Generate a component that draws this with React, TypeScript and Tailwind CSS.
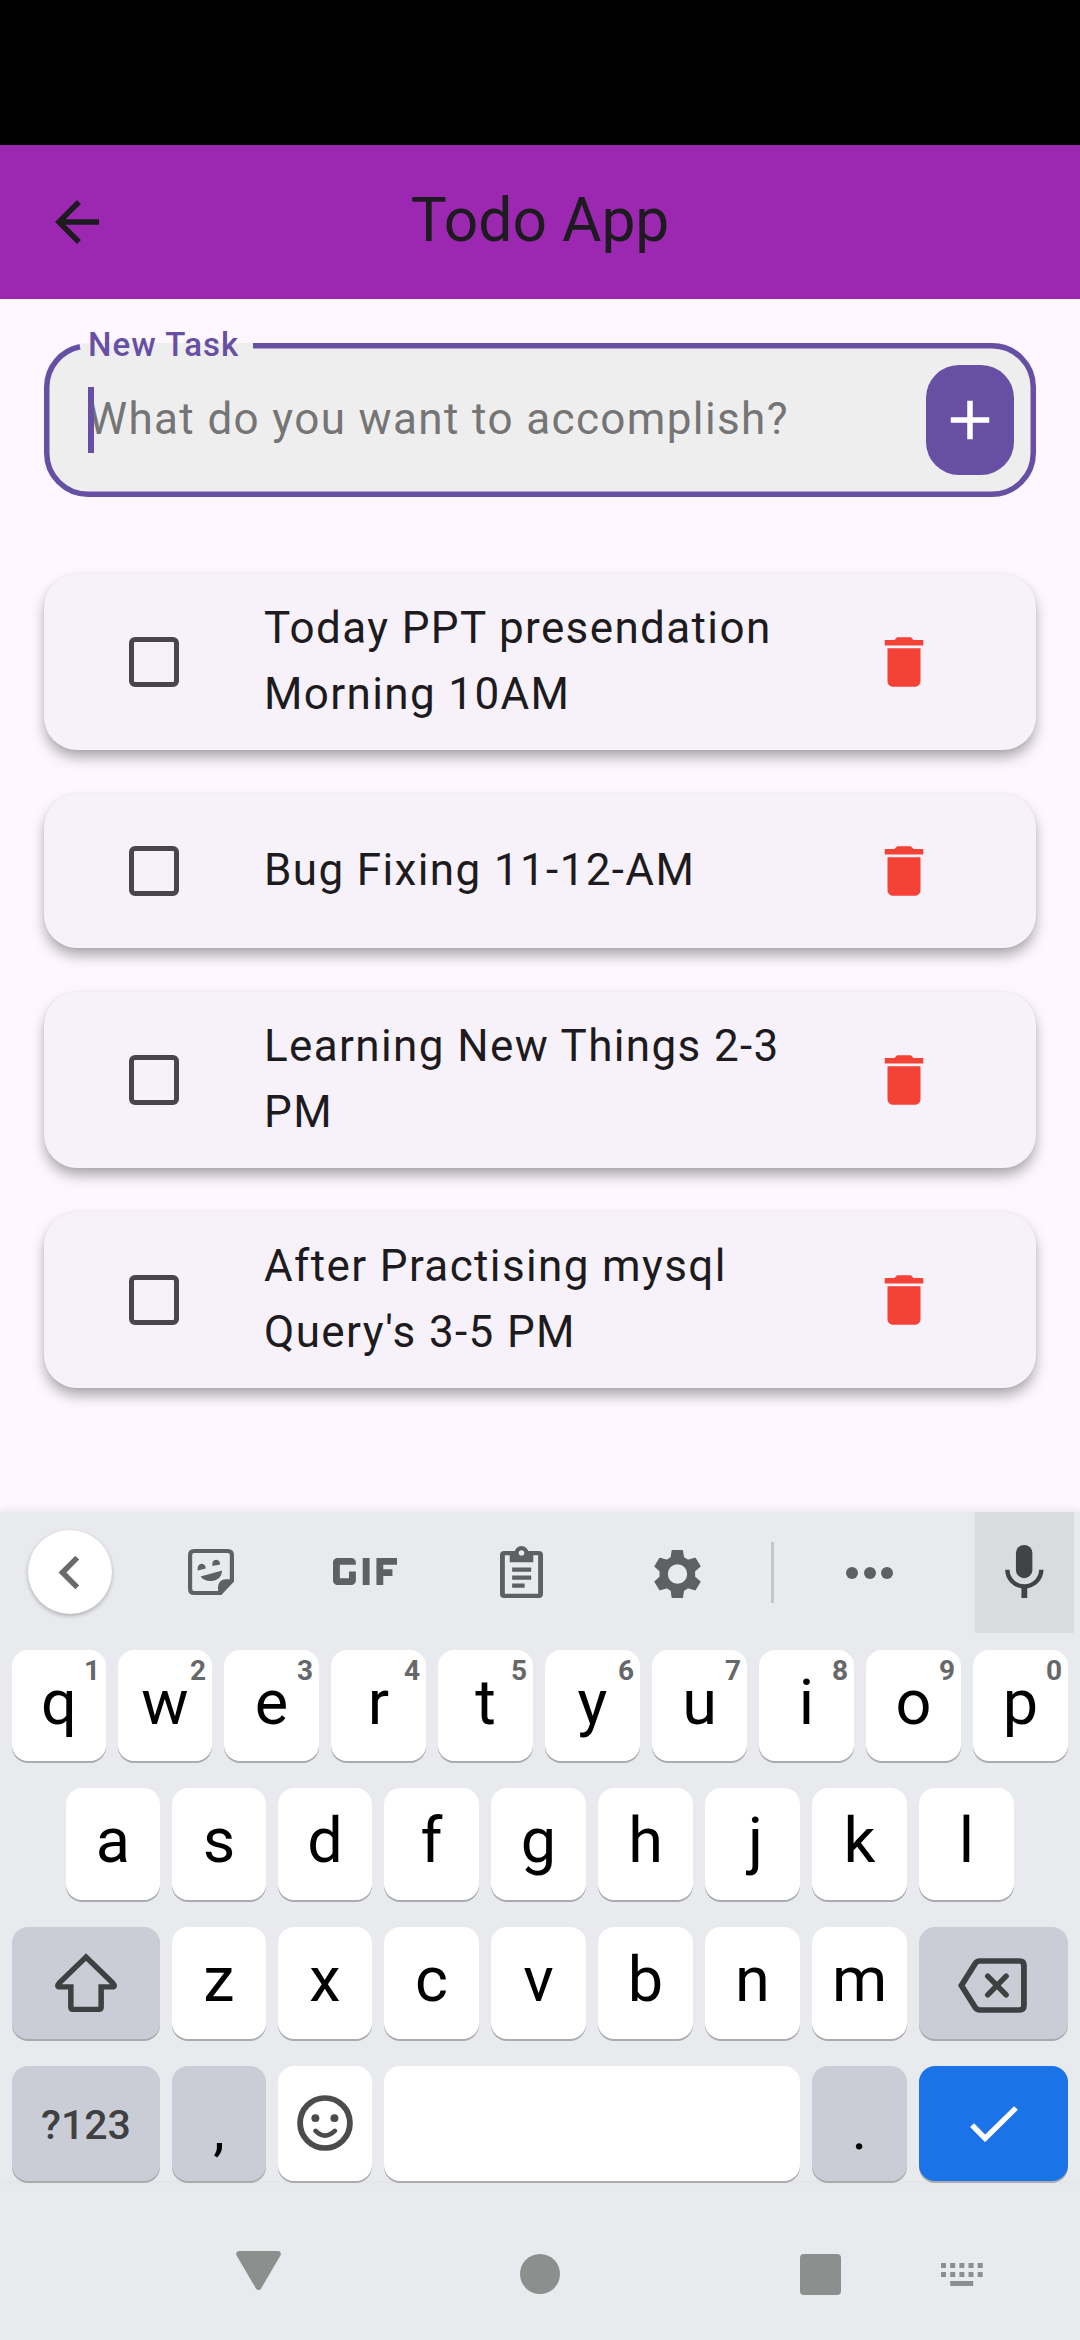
import type { ReactNode } from "react";
import { MdAdd, MdArrowBack, MdDelete } from "react-icons/md";

const tasks = [
  "Today PPT presendation Morning 10AM",
  "Bug Fixing 11-12-AM",
  "Learning New Things 2-3 PM",
  "After Practising mysql Query's 3-5 PM",
];

function TaskCard({ title }: { title: string }) {
  return (
    <li className="flex min-h-[154px] items-center rounded-[33px] bg-[#f7f2fa] py-[22px] pl-[85px] shadow-[0_0_3px_rgba(0,0,0,0.06),0_8px_14px_-1px_rgba(0,0,0,0.34)]">
      <span className="size-[50px] shrink-0 rounded-[6px] border-[5.5px] border-[#49454f]" />
      <span className="ml-[85px] w-[570px] shrink-0 text-[44px] leading-[66px] tracking-[1.375px] text-[#1d1b20]">
        <span className="relative -top-px">{title}</span>
      </span>
      <MdDelete className="ml-[37px] size-[66px] shrink-0 text-[#f44336]" />
    </li>
  );
}

function Key({ children, className = "bg-white" }: { children?: ReactNode; className?: string }) {
  return (
    <div className={`relative flex justify-center rounded-[16px] shadow-[0_2px_0_#a9abae] ${className}`}>
      {children}
    </div>
  );
}

function LetterKey({ letter, hint }: { letter: string; hint?: string }) {
  return (
    <Key>
      <span className={`pt-[16px] text-[63px] leading-[74px] text-black ${letter === "j" ? "pl-[6px]" : ""}`}>
        {letter}
      </span>
      {hint && (
        <span className="absolute top-[5px] right-[6px] text-[28px] leading-[32px] font-bold text-[#666769]">
          {hint}
        </span>
      )}
    </Key>
  );
}

function Toolbar() {
  return (
    <div className="flex h-[121px] items-center text-[#5f6062]">
      <div className="mt-[-1px] ml-[28px] flex size-[84px] items-center justify-center rounded-full bg-white pr-[2px] shadow-[0_2px_4px_rgba(0,0,0,0.25)]">
        <svg className="h-[33px] w-[20px]" viewBox="172 197 58 98" preserveAspectRatio="none" fill="none" stroke="#6a6a6a" strokeWidth="16">
          <path d="M225 202 182 246 225 290" />
        </svg>
      </div>
      <svg className="mt-[-1px] ml-[76px] h-[46px] w-[46px]" viewBox="547 178 132 137" preserveAspectRatio="none" fill="currentColor">
        <path d="M565 184H661Q673 184 673 196V272L640 309H565Q553 309 553 297V196Q553 184 565 184Z" fill="none" stroke="currentColor" strokeWidth="12" />
        <path d="M633 312V292Q635 268 656 268H679V275L640 315Z" />
        <path d="M575 242Q573 222 587 222Q597 223 598 236Z" />
        <path d="M617 229Q615 210 628 210Q639 211 639 224Z" />
        <path d="M583 260 645 242Q643 270 616 273Q594 275 583 260Z" />
      </svg>
      <svg className="mt-[-3px] ml-[99px] h-[27px] w-[64px]" viewBox="5 9 14 6" preserveAspectRatio="none" fill="currentColor">
        <path d="M11.5 9H13v6h-1.5zM9 9H6c-.6 0-1 .5-1 1v4c0 .5.4 1 1 1h3c.6 0 1-.5 1-1v-2H8.5v1.5h-2v-3H10V10c0-.5-.4-1-1-1zm10 1.5V9h-4.5v6H16v-2h2v-1.5h-2v-1z" />
      </svg>
      <svg className="mt-[-1px] ml-[103px] h-[52px] w-[43px]" viewBox="1452 168 124 157" preserveAspectRatio="none" fill="currentColor">
        <path fillRule="evenodd" d="M1464 183H1564Q1576 183 1576 195V313Q1576 325 1564 325H1464Q1452 325 1452 313V195Q1452 183 1464 183ZM1466 196V312H1562V196H1548V217H1480V196Z" />
        <path d="M1494 188A20 20 0 0 1 1534 188V200H1494Z" />
        <path d="M1487 233H1542V246H1487ZM1487 257H1542V270H1487ZM1487 281H1523V294H1487Z" />
        <circle cx="1514" cy="189" r="8" fill="#e8eaed" />
      </svg>
      <svg className="mt-[2px] ml-[111px] h-[48px] w-[47px]" viewBox="331 180 136 144" preserveAspectRatio="none" fill="currentColor">
        <path
          fillRule="evenodd"
          stroke="currentColor"
          strokeWidth="4"
          strokeLinejoin="round"
          d="M384 182H413L416 203 429 211 450 205 464 229 448 243V261L464 275 450 299 429 293 416 301 413 322H384L381 301 369 293 348 299 334 275 349 261V243L334 229 348 205 369 211 381 203ZM369 252A30 31.500 0 1 0 429 252A30 31.500 0 1 0 369 252Z"
        />
      </svg>
      <div className="ml-[70px] h-[61px] w-[3px] bg-[#c5c6c9]" />
      <div className="ml-[72px] flex w-[47px] justify-between">
        <span className="size-[12px] rounded-full bg-current" />
        <span className="size-[12px] rounded-full bg-current" />
        <span className="size-[12px] rounded-full bg-current" />
      </div>
      <div className="ml-[82px] flex h-full w-[99px] items-center justify-center bg-[#dadbdf] text-[#424345]">
        <svg className="mt-[-2px] h-[53px] w-[39px]" viewBox="1349 165 114 160" preserveAspectRatio="none" fill="currentColor">
          <rect x="1381" y="165" width="48" height="100" rx="24" />
          <path d="M1356 240A49.500 50 0 0 0 1455 240" fill="none" stroke="currentColor" strokeWidth="13" />
          <path d="M1397 289H1414V325H1397Z" />
        </svg>
      </div>
    </div>
  );
}

function Keyboard() {
  return (
    <section className="relative bg-[#e8eaed] shadow-[0_-2px_8px_rgba(0,0,0,0.08)]">
      <Toolbar />
      <div className="mt-[17px] grid h-[111px] grid-cols-[repeat(2,94px)_repeat(8,95px)] gap-[12px] px-[12px]">
        {"qwertyuiop".split("").map((c, i) => (
          <LetterKey key={c} letter={c} hint={String((i + 1) % 10)} />
        ))}
      </div>
      <div className="mt-[27px] grid h-[112px] grid-cols-[repeat(3,94px)_repeat(6,95px)] gap-[12px] px-[66px]">
        {"asdfghjkl".split("").map((c) => (
          <LetterKey key={c} letter={c} />
        ))}
      </div>
      <div className="mt-[27px] grid h-[112px] grid-cols-[148px_94px_94px_repeat(5,95px)_149px] gap-[12px] px-[12px]">
        <Key className="items-center bg-[#cbcdd6]">
          <svg className="mt-[-2px] h-[59px] w-[62px]" viewBox="159 548 180 176" preserveAspectRatio="none" fill="none" stroke="#3f4041" strokeWidth="16">
            <path d="M249 560 171 638Q162 649 174 649H205V710Q205 716 211 716H287Q293 716 293 710V649H324Q336 649 327 638Z" />
          </svg>
        </Key>
        {"zxcvbnm".split("").map((c) => (
          <LetterKey key={c} letter={c} />
        ))}
        <Key className="items-center bg-[#cbcdd6]">
          <svg className="mt-[4px] mr-[2px] h-[55px] w-[69px]" viewBox="1213 564 202 164" preserveAspectRatio="none" fill="none" stroke="#3f4041" strokeWidth="17">
            <path d="M1223 646 1263 581Q1268 573 1277 573H1393Q1406 573 1406 586V706Q1406 719 1393 719H1277Q1268 719 1263 711Z" />
            <path d="M1300 618 1354 674M1354 618 1300 674" strokeWidth="16" strokeLinecap="round" />
          </svg>
        </Key>
      </div>
      <div className="mt-[27px] grid h-[115px] grid-cols-[148px_94px_94px_416px_95px_149px] gap-[12px] px-[12px]">
        <Key className="bg-[#cbcdd6]">
          <span className="pt-[35px] text-[41px] leading-[48px] font-medium text-[#3f4041]">?123</span>
        </Key>
        <Key className="bg-[#cbcdd6]">
          <span className="pt-[29px] text-[58px] leading-[68px] text-black">,</span>
        </Key>
        <Key className="items-center bg-white">
          <svg className="mt-[-2px] size-[56px]" viewBox="862 165 163 167" preserveAspectRatio="none" fill="none" stroke="#4b4b4b">
            <ellipse cx="943.500" cy="248.500" rx="72.500" ry="74.500" strokeWidth="17" />
            <path d="M916 272Q943 300 972 272" strokeWidth="14" strokeLinecap="round" />
            <circle cx="915.500" cy="234" r="11.500" fill="#4b4b4b" stroke="none" />
            <circle cx="971" cy="234" r="11.500" fill="#4b4b4b" stroke="none" />
          </svg>
        </Key>
        <Key />
        <Key className="bg-[#cbcdd6]">
          <span className="pt-[29px] text-[58px] leading-[68px] text-black">.</span>
        </Key>
        <Key className="items-center bg-[#1b73e8]">
          <svg className="h-[36px] w-[48px]" viewBox="1247 197 140 109" preserveAspectRatio="none" fill="none" stroke="white" strokeWidth="16">
            <path d="M1253 255 1291 295 1381 203" />
          </svg>
        </Key>
      </div>
    </section>
  );
}

function NavigationBar() {
  return (
    <nav className="flex flex-1 items-start bg-[#e8eaed] pt-[70px] text-[#8d8f8e]">
      <svg className="ml-[236px] h-[39px] w-[45px]" viewBox="0 0 45 39" fill="currentColor" stroke="currentColor" strokeWidth="6" strokeLinejoin="round">
        <path d="M3.200 3H41.800L22.500 36Z" />
      </svg>
      <span className="mt-[3px] ml-[239px] size-[40px] rounded-full bg-current" />
      <span className="mt-[3px] ml-[240px] h-[41px] w-[41px] rounded-[4px] bg-current" />
      <svg className="mt-[12px] ml-[100px] h-[23px] w-[42px]" viewBox="0 0 42 23" fill="currentColor">
        {[0, 9].map((y) =>
          [0, 9.2, 18.4, 27.5, 36.7].map((x) => <rect key={`${x}-${y}`} x={x} y={y} width="5" height="5" />),
        )}
        <rect x="9.200" y="18" width="23" height="5" />
      </svg>
    </nav>
  );
}

export default function App() {
  return (
    <div className="flex h-[2340px] w-[1080px] flex-col overflow-hidden bg-[#fef7ff] font-['Roboto',sans-serif]">
      <div className="h-[145px] bg-black" />
      <header className="grid h-[154px] grid-cols-[66px_1fr_66px] items-center bg-[#9c27b0] px-[44px] text-[#1d1b20]">
        <MdArrowBack className="size-[66px]" />
        <h1 className="pb-[4px] text-center text-[60.5px] leading-[77px]">Todo App</h1>
      </header>
      <main className="h-[1213px] px-[44px] pt-[44px]">
        <div className="relative flex h-[154px] items-center justify-between rounded-[44px] bg-[#eeeeee] pr-[22px] pl-[44px]">
          <svg className="absolute inset-0 size-full" viewBox="0 0 992 154" fill="none" stroke="#6750a4" strokeWidth="5.500">
            <path d="M209 2.750H948A41.250 41.250 0 0 1 989.250 44V110A41.250 41.250 0 0 1 948 151.250H44A41.250 41.250 0 0 1 2.750 110V44A41.250 41.250 0 0 1 36 3.700" />
          </svg>
          <span className="absolute -top-[18px] left-[44px] text-[33px] leading-[40px] font-medium tracking-[1.030px] text-[#6750a4]">
            New Task
          </span>
          <span className="text-[44px] leading-[66px] tracking-[1.375px] text-[#757575]">
            <span className="relative -top-px">What do you want to accomplish?</span>
          </span>
          <span className="absolute top-[44px] left-[44px] h-[66px] w-[5.500px] bg-[#6750a4]" />
          <button className="relative flex h-[110px] w-[88px] items-center justify-center rounded-[33px] bg-[#6750a4] text-white">
            <MdAdd className="size-[66px]" />
          </button>
        </div>
        <ul className="mt-[77px] flex flex-col gap-[44px]">
          {tasks.map((t) => (
            <TaskCard key={t} title={t} />
          ))}
        </ul>
      </main>
      <Keyboard />
      <NavigationBar />
    </div>
  );
}
